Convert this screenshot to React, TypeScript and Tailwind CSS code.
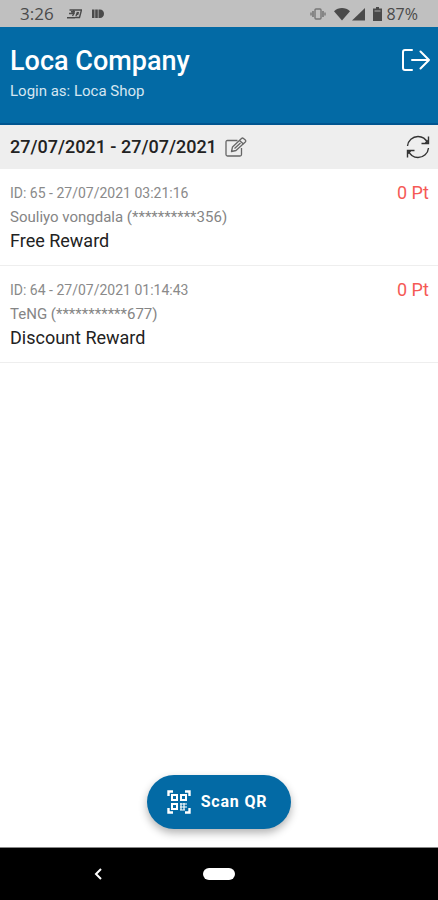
type Reward = {
  id: number;
  time: string;
  customer: string;
  title: string;
  points: number;
};

const rewards: Reward[] = [
  { id: 65, time: "27/07/2021 03:21:16", customer: "Souliyo vongdala (**********356)", title: "Free Reward", points: 0 },
  { id: 64, time: "27/07/2021 01:14:43", customer: "TeNG (***********677)", title: "Discount Reward", points: 0 }
];

function StatusBar() {
  return (
    <div className="flex h-[27px] shrink-0 items-center justify-between bg-[#c0c0c0] pr-5 pl-5 text-[#4a4a4a]">
      <div className="flex items-center">
        <span className="font-['Open_Sans',sans-serif] text-[17px] leading-6 font-medium">3:26</span>
        <svg className="ml-3 h-3 w-4" viewBox="0 0 16 12" fill="none" stroke="currentColor" strokeWidth="1.4">
          <path d="M3.500 2H15.500L13.500 9.500H9M1 9.800H9M3 5.500H8L6.500 8M8 2L7 5M10 8L11.500 4M12.500 4L11.500 7M5 3.800H9" />
        </svg>
        <svg className="ml-[10px] h-3 w-3" viewBox="0 0 12 12" fill="currentColor">
          <path d="M0 1.500h2.500v8.500H0zM3.200 1.500h2.600v8.500H3.200zM6.500 1.500H8c2.400 0 4 1.800 4 4.200S10.400 10 8 10H6.500z" />
        </svg>
      </div>
      <div className="flex items-center">
        <svg className="h-4 w-4" viewBox="0 0 16 16" fill="none" stroke="#777777">
          <rect x="5" y="3" width="6" height="10" rx="1" strokeWidth="1.4" />
          <path d="M3 5v6M13 5v6" strokeWidth="1.600" />
          <path d="M1 6.500v3M15 6.500v3" strokeWidth="1.400" />
        </svg>
        <svg className="ml-2 h-4 w-4" viewBox="0 0 16 16" fill="currentColor">
          <path d="M0 5.200C4.500 1 11.500 1 16 5.200L8 14.500z" />
        </svg>
        <svg className="ml-[2px] h-4 w-[13px]" viewBox="0 0 13 16" fill="currentColor">
          <path d="M13 2v12.500H0z" />
        </svg>
        <svg className="ml-2 h-4 w-[9px]" viewBox="0 0 9 16" fill="currentColor">
          <path d="M3 1h3v1.500h3V15H0V2.500h3z" />
          <path d="M1.500 5h6" stroke="#aaaaaa" />
        </svg>
        <span className="ml-1 font-['Open_Sans',sans-serif] text-base leading-6 font-medium">87%</span>
      </div>
    </div>
  );
}

function LogoutIcon() {
  return (
    <svg className="h-6 w-7" viewBox="0 0 28 24" fill="none" stroke="currentColor" strokeWidth="2" strokeLinecap="round" strokeLinejoin="round">
      <path d="M10 2H3Q1 2 1 4v16q0 2 2 2H10" />
      <path d="M10 12h17M18.500 3.500L27 12L18.500 20.500" />
    </svg>
  );
}

function EditIcon() {
  return (
    <svg className="h-5 w-[22px]" viewBox="0 0 22 20" fill="none" stroke="#666666" strokeWidth="1.300" strokeLinejoin="round">
      <path d="M12.500 3.500H2.500Q1 3.500 1 5v12.500Q1 19 2.500 19H15q1.500 0 1.500-1.500V11" />
      <path d="M6.500 14.500l1-4.500L16.500 1.500q1-.9 2 0l1.800 1.600q1 .9 0 1.900L11 13.500z" />
      <path d="M14.500 3.500l4 3.500M9.500 11.500l6-5.500" />
    </svg>
  );
}

function RefreshIcon() {
  return (
    <svg className="h-6 w-6" viewBox="0 0 24 24" fill="none" stroke="#333333" strokeWidth="1.400">
      <path d="M1.500 11C2 5.500 6.500 1.500 12 1.500c4.200 0 7.800 2.300 9.500 6.500" />
      <path d="M22.500 1.500V8.500H15.500M22.500 5L19 8.500" />
      <path d="M22.500 13C22 18.500 17.500 22.500 12 22.500c-4.200 0-7.800-2.300-9.500-6.500" />
      <path d="M1.500 22.500V15.500H8.500M1.500 19L5 15.500" />
    </svg>
  );
}

function QrIcon() {
  return (
    <svg className="h-6 w-6" viewBox="0 0 24 24" fill="none" stroke="currentColor" strokeWidth="2">
      <path d="M1.500 6V1.500H6M18 1.500h4.500V6M22.500 18v4.500H18M6 22.500H1.500V18" strokeWidth="2.400" />
      <path d="M5 5h5v5H5zM14 5h5v5h-5zM5 14h5v5H5z" />
      <path d="M13 14h7M13 17h7M13 20h5M14 13v7M17 13v7" strokeWidth="1.200" />
    </svg>
  );
}

function RewardRow({ reward }: { reward: Reward }) {
  return (
    <li className="flex items-start justify-between border-b border-[#eeeeee] py-3 pr-[9px] pl-[10px]">
      <div>
        <p className="text-sm leading-6 text-[#8a8a8a]">
          ID: {reward.id} - {reward.time}
        </p>
        <p className="text-[15px] leading-6 text-[#858585]">{reward.customer}</p>
        <p className="text-lg leading-6 text-[#222222]">{reward.title}</p>
      </div>
      <span className="text-lg leading-6 text-[#f55a55]">{reward.points} Pt</span>
    </li>
  );
}

export default function App() {
  return (
    <div className="flex min-h-screen flex-col bg-white font-[Roboto,sans-serif]">
      <StatusBar />

      <header className="flex items-start justify-between border-b-2 border-[#005590] bg-[#036aa5] px-2 pt-[18px] pb-[20px] text-white">
        <div className="pl-[2px]">
          <h1 className="text-[27px] leading-8 font-medium">Loca Company</h1>
          <p className="mt-[2px] text-[15px] leading-6 text-[#d5e6f1]">Login as: Loca Shop</p>
        </div>
        <button type="button" aria-label="Log out" className="mt-[3px]">
          <LogoutIcon />
        </button>
      </header>

      <div className="flex h-11 items-center justify-between bg-[#eeeeee] pr-2 pl-[10px]">
        <button type="button" aria-label="Change date range" className="flex items-center gap-2">
          <span className="text-lg leading-6 font-medium text-[#222222]">27/07/2021 - 27/07/2021</span>
          <EditIcon />
        </button>
        <button type="button" aria-label="Refresh">
          <RefreshIcon />
        </button>
      </div>

      <main className="flex grow flex-col">
        <ul>
          {rewards.map((reward) => (
            <RewardRow key={reward.id} reward={reward} />
          ))}
        </ul>
        <div className="mt-auto flex justify-center pb-[18px]">
          <button
            type="button"
            className="flex items-center gap-[10px] rounded-full bg-[#036aa5] py-[15px] pr-6 pl-5 text-white shadow-[0_4px_8px_rgba(0,0,0,0.3)]"
          >
            <QrIcon />
            <span className="text-base leading-6 font-bold tracking-wider">Scan QR</span>
          </button>
        </div>
      </main>

      <nav className="grid h-[53px] shrink-0 grid-cols-[1fr_auto_1fr] items-center border-t border-[#888888] bg-black text-white">
        <button type="button" aria-label="Back" className="mr-2 justify-self-center">
          <svg className="h-3 w-2" viewBox="0 0 8 12" fill="none" stroke="currentColor" strokeWidth="2">
            <path d="M7 1L2 6l5 5" />
          </svg>
        </button>
        <button type="button" aria-label="Home" className="h-3 w-8 rounded-full bg-white" />
      </nav>
    </div>
  );
}
